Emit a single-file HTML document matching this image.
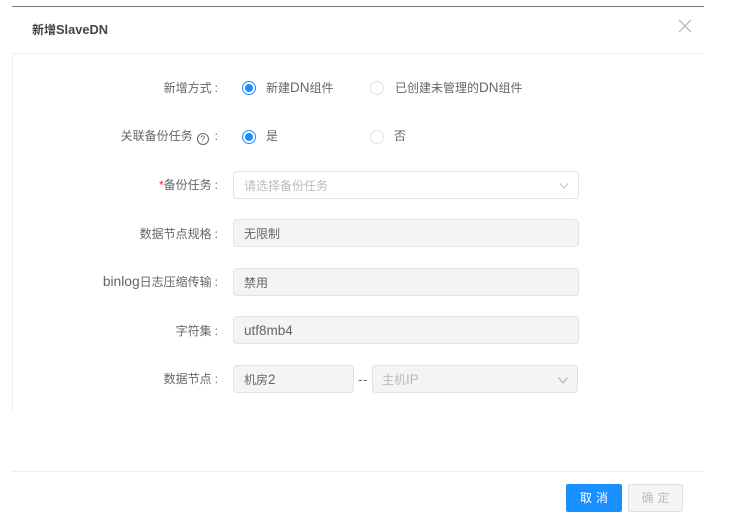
<!DOCTYPE html>
<html lang="zh">
<head>
<meta charset="utf-8">
<style>
html,body{margin:0;padding:0;background:#fff}
#p{position:relative;width:750px;height:525px;overflow:hidden;background:#fff;font-family:"Liberation Sans","Noto Sans CJK SC",sans-serif;font-size:12px;color:#666;filter:blur(.3px)}
#p div{position:absolute;box-sizing:border-box;white-space:nowrap}
.l{right:532px;line-height:16px;text-align:right;color:#666}
.l b{font-weight:normal;margin-left:3px}
.n{font-size:13.5px}
.t{line-height:16px;color:#666}
.i{height:28px;border:1px solid #e2e2e2;border-radius:4px;line-height:28px;padding-left:10px;background:#f4f4f4;color:#666}
.r{width:14px;height:14px;border-radius:50%;border:1px solid #e2e2e2;background:#fff}
.r.on{border-color:#1890ff}
.r.on:after{content:"";position:absolute;left:2px;top:2px;width:8px;height:8px;border-radius:50%;background:#1890ff}
svg{position:absolute}
</style>
</head>
<body>
<div id="p">
<div style="left:12px;top:6px;width:692px;height:1px;background:#777"></div>
<div style="left:32px;top:22px;line-height:16px;font-weight:bold;color:#444;font-size:12px">新增<span style="font-size:12.8px">SlaveDN</span></div>
<svg style="left:678px;top:19px" width="14" height="14" viewBox="0 0 14 14"><path d="M1 1L13 13M13 1L1 13" stroke="#aaa" stroke-width="1" fill="none"/></svg>
<div style="left:12px;top:53px;width:692px;height:1px;background:#eee"></div>
<div style="left:12px;top:53px;width:1px;height:360px;background:#eee"></div>

<div class="l" style="top:80px">新增方式<b>:</b></div>
<div class="r on" style="left:242px;top:81px"></div>
<div class="t" style="left:266px;top:80px">新建<span class="n">DN</span>组件</div>
<div class="r" style="left:370px;top:81px"></div>
<div class="t" style="left:395px;top:80px">已创建未管理的<span class="n">DN</span>组件</div>

<div class="l" style="top:128px">关联备份任务<span style="display:inline-block;width:12px;height:12px;margin-left:4px;border:1px solid #666;border-radius:50%;box-sizing:border-box;font-size:9px;line-height:10px;text-align:center;vertical-align:-2px">?</span><b style="margin-left:6px">:</b></div>
<div class="r on" style="left:242px;top:130px"></div>
<div class="t" style="left:266px;top:128px">是</div>
<div class="r" style="left:370px;top:130px"></div>
<div class="t" style="left:394px;top:128px">否</div>

<div class="l" style="top:177px"><span style="color:#f5222d">*</span>备份任务<b>:</b></div>
<div class="i" style="left:233px;top:171px;width:346px;background:#fff;color:#bbb">请选择备份任务</div>
<svg style="left:558px;top:181px" width="12" height="10" viewBox="0 0 12 10"><path d="M2 2.5L6 7L10 2.5" stroke="#c4c4c4" stroke-width="1" fill="none"/></svg>

<div class="l" style="top:226px">数据节点规格<b>:</b></div>
<div class="i" style="left:233px;top:219px;width:346px">无限制</div>

<div class="l" style="top:274px"><span style="font-size:13.8px">binlog</span>日志压缩传输<b>:</b></div>
<div class="i" style="left:233px;top:268px;width:346px">禁用</div>

<div class="l" style="top:323px">字符集<b>:</b></div>
<div class="i n" style="left:233px;top:316px;width:346px;line-height:27px">utf8mb4</div>

<div class="l" style="top:371px">数据节点<b>:</b></div>
<div class="i" style="left:233px;top:365px;width:121px">机房<span class="n">2</span></div>
<div class="t n" style="left:358px;top:372px;letter-spacing:.5px">--</div>
<div class="i" style="left:372px;top:365px;width:206px;color:#bbb;padding-left:9px">主机<span class="n">IP</span></div>
<svg style="left:557px;top:375px" width="12" height="10" viewBox="0 0 12 10"><path d="M1.5 2.5L6 8L10.5 2.5" stroke="#aaa" stroke-width="1" fill="none"/></svg>

<div style="left:12px;top:471px;width:692px;height:1px;background:#eee"></div>
<div style="left:566px;top:484px;width:56px;height:28px;background:#1890ff;border-radius:2px;color:#fff;text-align:center;line-height:28px;font-size:12px;letter-spacing:4px;padding-left:4px">取消</div>
<div style="left:628px;top:484px;width:55px;height:28px;background:#f5f5f5;border:1px solid #e0e0e0;border-radius:2px;color:#bbb;text-align:center;line-height:26px;font-size:12px;letter-spacing:4px;padding-left:4px">确定</div>
</div>
</body>
</html>
